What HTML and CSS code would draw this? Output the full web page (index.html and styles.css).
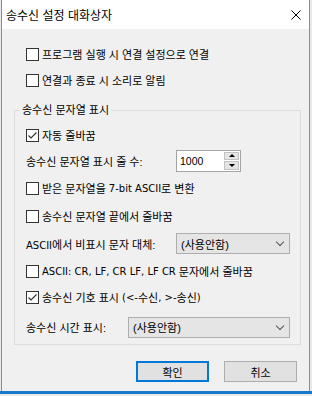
FILE: index.html
```html
<!DOCTYPE html>
<html lang="ko">
<head>
    <meta charset="UTF-8">
    <title>송수신 설정 대화상자</title>
    <link rel="stylesheet" href="styles.css">
</head>
<body>
    <div class="window">
        <div class="titlebar">
            <span class="title">송수신 설정 대화상자</span>
            <svg class="close" width="10" height="10" viewBox="0 0 10 10">
                <path d="M0.5 0.5 L9.5 9.5 M9.5 0.5 L0.5 9.5" stroke="#000" stroke-width="1" fill="none"/>
            </svg>
        </div>

        <div class="content">
            <label class="row check"><span class="box"></span>프로그램 실행 시 연결 설정으로 연결</label>
            <label class="row check"><span class="box"></span>연결과 종료 시 소리로 알림</label>

            <!-- 송수신 문자열 그룹 -->
            <fieldset class="group">
                <legend>송수신 문자열 표시</legend>
                <label class="row check r1"><span class="box checked"></span>자동 줄바꿈</label>
                <div class="row r2">
                    <span class="field-label w150">송수신 문자열 표시 줄 수:</span>
                    <div class="spin">
                        <span class="spin-val">1000</span>
                        <div class="spin-btns">
                            <span class="spin-btn"><i class="arrow up"></i></span>
                            <span class="spin-btn"><i class="arrow down"></i></span>
                        </div>
                    </div>
                </div>
                <label class="row check r3"><span class="box"></span>받은 문자열을 <span class="en">7-bit ASCII</span>로 변환</label>
                <label class="row check r4"><span class="box"></span>송수신 문자열 끝에서 줄바꿈</label>
                <div class="row r5">
                    <span class="field-label w150"><span class="en">ASCII</span>에서 비표시 문자 대체:</span>
                    <div class="select sel-short"><span>(사용안함)</span><i class="chev"></i></div>
                </div>
                <label class="row check r6"><span class="box"></span><span class="en">ASCII: CR, LF, CR LF, LF CR</span> 문자에서 줄바꿈</label>
                <label class="row check r7"><span class="box checked"></span>송수신 기호 표시 <span class="en">(&lt;-</span>수신<span class="en">, &gt;-</span>송신<span class="en">)</span></label>
                <div class="row r8">
                    <span class="field-label w102">송수신 시간 표시:</span>
                    <div class="select sel-long"><span>(사용안함)</span><i class="chev"></i></div>
                </div>
            </fieldset>

            <div class="buttons">
                <button class="btn default">확인</button>
                <button class="btn">취소</button>
            </div>
        </div>
    </div>
    <div class="taskbar"></div>
</body>
</html>
```

FILE: styles.css
```css
body {
    margin: 0;
    background-color: #e9e9e9;
    font-family: "Liberation Sans", "Noto Sans CJK KR", sans-serif;
    color: #000;
}
.window {
    width: 309px;
    height: 391px;
    margin-left: 1px;
    border-left: 1px solid #8c8c8c;
    border-right: 1px solid #8c8c8c;
    background-color: #f0f0f0;
    box-sizing: border-box;
}
.titlebar {
    height: 29px;
    background-color: #fff;
    display: flex;
    align-items: center;
    padding-left: 4px;
}
.title {
    font-family: "Noto Sans CJK KR", sans-serif;
    font-size: 12px;
    flex: 1;
}
.close {
    margin-right: 8px;
    margin-top: 1px;
}
.content {
    padding: 12px 0 0 0;
    font-size: 11px;
}
.en {
    font-family: "DejaVu Sans", sans-serif;
    font-size: 10px;
}
.row {
    display: flex;
    align-items: center;
    height: 26px;
    white-space: pre;
}
.content > .check {
    padding-left: 24px;
}
.box {
    width: 13px;
    height: 13px;
    box-sizing: border-box;
    border: 1px solid #333;
    background-color: #fff;
    margin-right: 3px;
    flex-shrink: 0;
}
.box.checked {
    background: #fff url("data:image/svg+xml;utf8,<svg xmlns='http://www.w3.org/2000/svg' width='11' height='11'><path d='M1.5 5.5 L4 8 L9.5 2.5' stroke='%23333' stroke-width='1.2' fill='none'/></svg>") no-repeat center;
}

/* 그룹 박스 */
.group {
    margin: 10px 0 0 12px;
    width: 287px;
    box-sizing: border-box;
    border: 1px solid #dcdcdc;
    padding: 5px 10px 0 11px;
}
.group legend {
    padding: 0 2px;
    margin-left: -6px;
    line-height: 14px;
}
.r1 { height: 26px; }
.r2 { height: 25px; }
.r3 { height: 30px; }
.r4 { height: 26px; }
.r5 { height: 29px; }
.r6 { height: 26px; }
.r7 { height: 26px; }
.r8 { height: 34px; }
.field-label {
    display: inline-block;
}
.w150 { width: 150px; }
.w102 { width: 102px; }

.spin {
    display: flex;
    width: 65px;
    height: 22px;
    box-sizing: border-box;
    border: 1px solid #a5a5a5;
    background-color: #fff;
}
.spin-val {
    flex: 1;
    padding-left: 3px;
    font-size: 10.5px;
    line-height: 20px;
}
.spin-btns {
    display: flex;
    flex-direction: column;
    gap: 1px;
    width: 17px;
    padding: 1px;
    box-sizing: border-box;
}
.spin-btn {
    flex: 1;
    background-color: #e5e5e5;
    border: 1px solid #c2c2c2;
    display: flex;
    align-items: center;
    justify-content: center;
}
.arrow {
    width: 0;
    height: 0;
    border-left: 3px solid transparent;
    border-right: 3px solid transparent;
}
.arrow.up { border-bottom: 3px solid #000; }
.arrow.down { border-top: 3px solid #000; }

.select {
    display: flex;
    align-items: center;
    justify-content: space-between;
    height: 21px;
    box-sizing: border-box;
    border: 1px solid #adadad;
    background-color: #e5e5e5;
    padding: 0 6px 0 4px;
}
.sel-short { width: 114px; }
.sel-long { width: 162px; }
.chev {
    width: 5px;
    height: 5px;
    border-right: 1px solid #555;
    border-bottom: 1px solid #555;
    transform: rotate(45deg);
    margin-top: -3px;
}

.buttons {
    display: flex;
    justify-content: flex-end;
    gap: 15px;
    margin-top: 16px;
    padding-right: 12px;
}
.btn {
    width: 73px;
    height: 21px;
    background-color: #e1e1e1;
    border: 1px solid #adadad;
    font-family: "Noto Sans CJK KR", sans-serif;
    font-size: 11px;
    padding: 0;
}
.btn.default {
    border: 2px solid #0078d7;
}
.taskbar {
    height: 3px;
    background-color: #1979ca;
}
```
